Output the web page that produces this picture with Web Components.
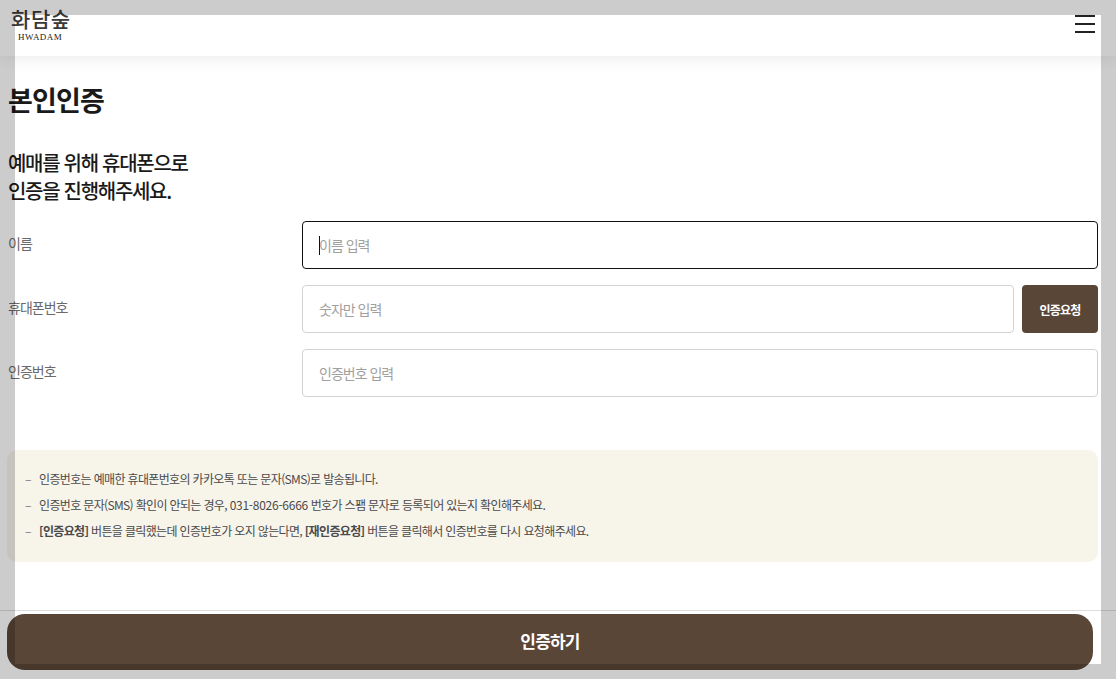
<!DOCTYPE html>
<html lang="ko"><head><meta charset="utf-8"><title>본인인증</title>
<style>
html,body{margin:0;padding:0;height:100%;overflow:hidden;background:#fff}
body{font-family:"Noto Sans CJK KR","Noto Sans",sans-serif;color:#1a1a1a}
.page{display:flex;flex-direction:column;height:679px}
</style></head><body>
<div class="page">
<app-header></app-header>
<verify-page>
  <form-field label="이름" placeholder="이름 입력" focused></form-field>
  <form-field label="휴대폰번호" placeholder="숫자만 입력" action="인증요청"></form-field>
  <form-field label="인증번호" placeholder="인증번호 입력"></form-field>
  <notice-box>
    <li>인증번호는 예매한 휴대폰번호의 카카오톡 또는 문자(SMS)로 발송됩니다.</li>
    <li>인증번호 문자(SMS) 확인이 안되는 경우, <span style="letter-spacing:-.25px">031-8026-6666</span> 번호가 스팸 문자로 등록되어 있는지 확인해주세요.</li>
    <li><b>[인증요청]</b> 버튼을 클릭했는데 인증번호가 오지 않는다면, <b>[재인증요청]</b> 버튼을 클릭해서 인증번호를 다시 요청해주세요.</li>
  </notice-box>
</verify-page>
<foot-bar>인증하기</foot-bar>
</div>
<spot-overlay></spot-overlay>
<script>
const def=(name,html,setup)=>customElements.define(name,class extends HTMLElement{
  connectedCallback(){const r=this.attachShadow({mode:'open'});r.innerHTML=html;if(setup)setup(this,r);}
});
def('app-header',`<style>
:host{display:flex;flex:none;height:56px;align-items:flex-start;justify-content:space-between;background:#fff;box-shadow:0 4px 14px rgba(0,0,0,.07);position:relative;z-index:1;box-sizing:border-box;padding:7px 21px 0 11px}
.logo{display:flex;flex-direction:column;width:59px;align-items:flex-start}
.ko{font-size:21px;line-height:22px;font-weight:500;color:#3a3a3a;letter-spacing:.6px;white-space:nowrap}
.en{font-family:"Liberation Serif",serif;font-size:9px;line-height:10px;margin-top:3px;margin-left:7px;color:#222;letter-spacing:.45px}
.menu{display:flex;flex-direction:column;gap:6px;width:20px;margin-top:8px}
.menu i{display:block;height:2px;background:#222}
</style><div class="logo"><span class="ko">화담숲</span><span class="en">HWADAM</span></div>
<div class="menu"><i></i><i></i><i></i></div>`);
def('verify-page',`<style>
:host{display:flex;flex-direction:column;flex:1;min-height:0;padding:24px 18px 0 8px;box-sizing:border-box}
h1{margin:0;font-size:27px;line-height:40px;font-weight:700;letter-spacing:-.8px;color:#1a1a1a}
h2{margin:29px 0 16px;font-size:20px;line-height:28px;font-weight:500;letter-spacing:-1.3px;color:#1a1a1a}
.fields{display:flex;flex-direction:column;gap:16px}
</style><h1>본인인증</h1><h2>예매를 위해 휴대폰으로<br>인증을 진행해주세요.</h2><div class="fields"><slot></slot></div>`);
customElements.define('form-field',class extends HTMLElement{connectedCallback(){
  const a=this.getAttribute('action'),f=this.hasAttribute('focused');
  this.attachShadow({mode:'open'}).innerHTML=`<style>
  :host{display:flex;height:48px;font-size:14px;letter-spacing:-1px}
  .l{width:294px;flex:none;color:#6a6a6a;line-height:44px}
  .w{flex:1;display:flex;gap:8px}
  .i{flex:1;position:relative;box-sizing:border-box;border:1px solid ${f?'#111':'#d2d2d2'};border-radius:4px;padding-left:16px;line-height:46px;color:#a0a0a0;background:#fff}
  .c{position:absolute;left:16px;top:14px;width:1px;height:19px;background:#111}
  button{width:76px;border:0;border-radius:4px;background:#5a4637;color:#fff;font:700 12px "Noto Sans CJK KR",sans-serif;letter-spacing:-.8px;padding:0}
  </style><div class="l">${this.getAttribute('label')}</div><div class="w"><div class="i">${this.getAttribute('placeholder')}${f?'<span class="c"></span>':''}</div>${a?`<button>${a}</button>`:''}</div>`;
}});
def('notice-box',`<style>
:host{display:block;margin-top:37px;margin-left:-1px;background:#f7f4ea;border-radius:10px;padding:16px 14px 18px 18px;font-size:12px;line-height:26px;letter-spacing:-.65px;color:#4a4a4a;height:112px;box-sizing:border-box}
::slotted(li){list-style:none;position:relative;padding-left:14px;white-space:nowrap}
::slotted(li)::before{content:"–";position:absolute;left:0;color:#777}
</style><slot></slot>`);
def('foot-bar',`<style>
:host{display:block;flex:none;border-top:1px solid #ddd;padding:3px 23px 9px 7px;background:#fff}
button{display:block;width:100%;height:56px;border:0;border-radius:18px;background:#5a4637;color:#fff;font:700 17px "Noto Sans CJK KR",sans-serif;letter-spacing:-.8px;padding:0 0 3px}
</style><button><slot></slot></button>`);
def('spot-overlay',`<style>
:host{position:fixed;left:15px;top:15px;width:1086px;height:649px;box-shadow:0 0 0 2000px rgba(0,0,0,.2);z-index:10;pointer-events:none}
</style>`);
</script>
</body></html>
